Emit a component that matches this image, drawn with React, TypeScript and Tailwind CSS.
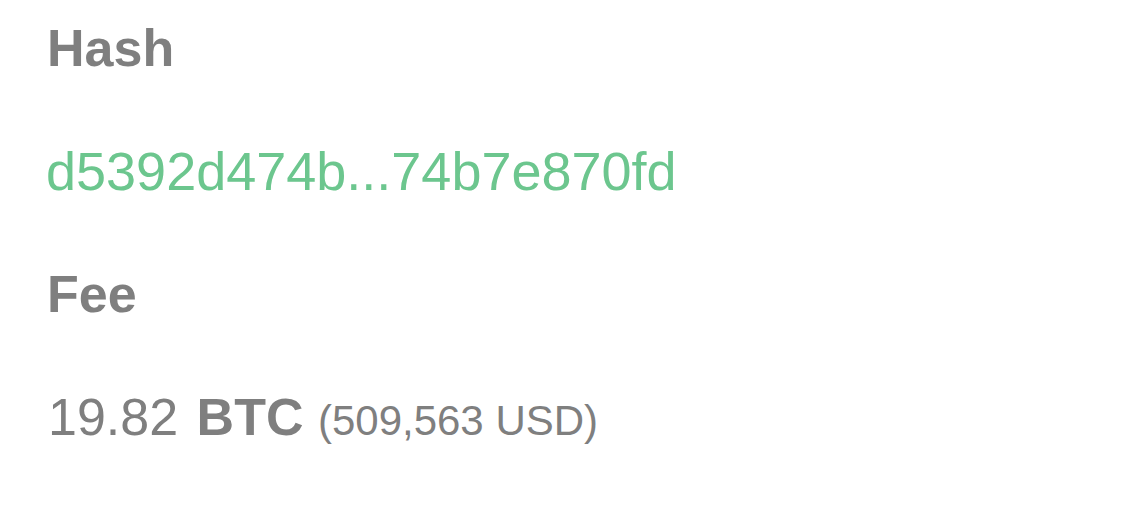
export default function App() {
  return (
    <div className="w-[1125px] h-[507px] bg-white font-['Liberation_Sans',Arial,sans-serif] text-[#7f7f7f] pl-[47px] pt-[18px]">
      <div className="flex flex-col gap-[63px]">
        <div className="text-[52px] leading-[60px] font-bold">Hash</div>
        <div className="text-[54px] leading-[60px] text-[#6cc68e] -ml-[1px]">d5392d474b...74b7e870fd</div>
        <div className="text-[52px] leading-[60px] font-bold">Fee</div>
        <div className="text-[52px] leading-[60px] ml-[1px]">
          <span className="mr-[4px]">19.82</span> <span className="font-bold">BTC</span>{" "}
          <span className="text-[42px]">(509,563 USD)</span>
        </div>
      </div>
    </div>
  );
}
